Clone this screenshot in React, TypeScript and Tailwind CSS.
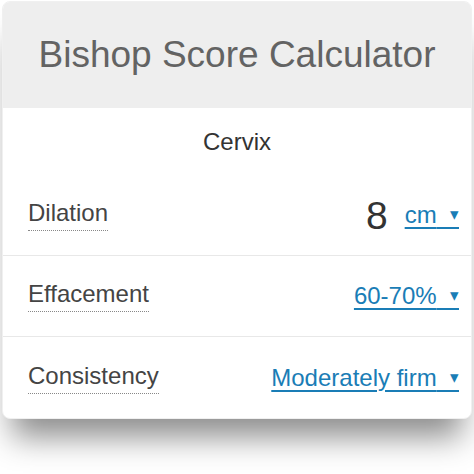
const font = { fontFamily: '"Liberation Sans", Arial, sans-serif' }

function Select({ label }: { label: string }) {
  return (
    <span className="text-[24px] text-[#1a7db6] underline underline-offset-[4px] decoration-[1.5px] whitespace-pre">
      {label}  <span className="text-[17px] align-[3px]">▾</span>
    </span>
  )
}

function Row({ label, children, last }: { label: string; children: React.ReactNode; last?: boolean }) {
  return (
    <div className={`flex items-center justify-between h-[81px] pl-[25px] pr-[12px] ${last ? '' : 'border-b border-[#e8e8e8]'}`}>
      <span className="text-[24px] text-[#444] border-b border-dotted border-[#888] leading-[28px] pb-[3px]">{label}</span>
      <div className="flex items-center gap-[17px]">{children}</div>
    </div>
  )
}

export default function App() {
  return (
    <div className="w-[474px] h-[474px] bg-white pt-[1px] px-[2px]" style={font}>
      <div className="rounded-[8px] bg-white shadow-[0_28px_30px_-10px_rgba(0,0,0,0.45)] overflow-hidden border border-[#f0f0f0]">
        <div className="bg-[#eeeeee] h-[106px] flex items-center justify-center">
          <h1 className="text-[37px] text-[#636363]">Bishop Score Calculator</h1>
        </div>
        <div className="h-[67px] flex items-center justify-center text-[24px] text-[#333]">Cervix</div>
        <Row label="Dilation">
          <span className="text-[39px] text-[#333] leading-none">8</span>
          <Select label="cm" />
        </Row>
        <Row label="Effacement">
          <Select label="60-70%" />
        </Row>
        <Row label="Consistency" last>
          <Select label="Moderately firm" />
        </Row>
      </div>
    </div>
  )
}
